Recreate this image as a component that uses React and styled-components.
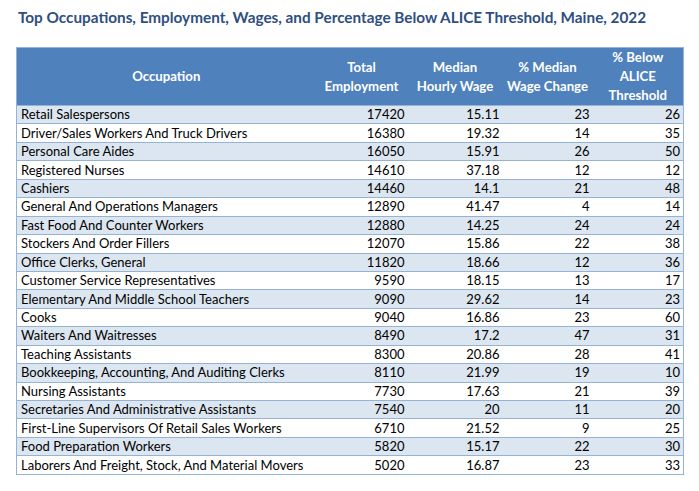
import React from 'react';
import styled, { createGlobalStyle } from 'styled-components';

const GlobalStyle = createGlobalStyle`
  html, body {
    margin: 0;
    padding: 0;
    background: #fff;
  }
  body {
    font-family: Lato, "Open Sans", sans-serif;
  }
`;

const Page = styled.div`
  width: 699px;
  height: 491px;
  padding: 8px 0 0 16px;
  box-sizing: border-box;
  overflow: hidden;
`;

const Title = styled.h1`
  margin: 0 0 0 2px;
  font-size: 15.3px;
  font-weight: 700;
  color: #2e4f80;
  line-height: 18px;
  height: 39px;
  white-space: nowrap;
`;

const Table = styled.table`
  border-collapse: collapse;
  table-layout: fixed;
  width: 667px;
  border: 1.5px solid #95b3d7;
  font-size: 13px;
  color: #000;
`;

const HeadRow = styled.tr`
  height: 57px;
  background: #4f81bd;
`;

const HeadCell = styled.th`
  padding: 0 2px;
  color: #fff;
  font-weight: 700;
  font-size: 13.2px;
  line-height: 19px;
  text-align: center;
  vertical-align: middle;
`;

const Row = styled.tr`
  height: 18.45px;
  background: ${(p) => (p.$alt ? '#dce6f1' : '#fff')};
  border-top: 1.5px solid #95b3d7;
`;

const Cell = styled.td`
  padding: 0 3px 0 4px;
  line-height: 17px;
  white-space: nowrap;
  overflow: hidden;
  text-align: ${(p) => (p.$num ? 'right' : 'left')};
`;

const cols = [299, 92, 95, 90, 91];

const heads = [
  ['Occupation'],
  ['Total', 'Employment'],
  ['Median', 'Hourly Wage'],
  ['% Median', 'Wage Change'],
  ['% Below', 'ALICE', 'Threshold'],
];

const rows = [
  ['Retail Salespersons', 17420, '15.11', 23, 26],
  ['Driver/Sales Workers And Truck Drivers', 16380, '19.32', 14, 35],
  ['Personal Care Aides', 16050, '15.91', 26, 50],
  ['Registered Nurses', 14610, '37.18', 12, 12],
  ['Cashiers', 14460, '14.1', 21, 48],
  ['General And Operations Managers', 12890, '41.47', 4, 14],
  ['Fast Food And Counter Workers', 12880, '14.25', 24, 24],
  ['Stockers And Order Fillers', 12070, '15.86', 22, 38],
  ['Office Clerks, General', 11820, '18.66', 12, 36],
  ['Customer Service Representatives', 9590, '18.15', 13, 17],
  ['Elementary And Middle School Teachers', 9090, '29.62', 14, 23],
  ['Cooks', 9040, '16.86', 23, 60],
  ['Waiters And Waitresses', 8490, '17.2', 47, 31],
  ['Teaching Assistants', 8300, '20.86', 28, 41],
  ['Bookkeeping, Accounting, And Auditing Clerks', 8110, '21.99', 19, 10],
  ['Nursing Assistants', 7730, '17.63', 21, 39],
  ['Secretaries And Administrative Assistants', 7540, '20', 11, 20],
  ['First-Line Supervisors Of Retail Sales Workers', 6710, '21.52', 9, 25],
  ['Food Preparation Workers', 5820, '15.17', 22, 30],
  ['Laborers And Freight, Stock, And Material Movers', 5020, '16.87', 23, 33],
];

export default function App() {
  return (
    <>
      <GlobalStyle />
      <Page>
        <Title>
          Top Occupations, Employment, Wages, and Percentage Below ALICE Threshold, Maine, 2022
        </Title>
        <Table>
          <colgroup>
            {cols.map((w, i) => (
              <col key={i} style={{ width: w }} />
            ))}
          </colgroup>
          <thead>
            <HeadRow>
              {heads.map((lines, i) => (
                <HeadCell key={i}>
                  {lines.map((l, j) => (
                    <React.Fragment key={j}>
                      {j > 0 && <br />}
                      {l}
                    </React.Fragment>
                  ))}
                </HeadCell>
              ))}
            </HeadRow>
          </thead>
          <tbody>
            {rows.map((r, i) => (
              <Row key={i} $alt={i % 2 === 0}>
                {r.map((v, j) => (
                  <Cell key={j} $num={j > 0}>
                    {v}
                  </Cell>
                ))}
              </Row>
            ))}
          </tbody>
        </Table>
      </Page>
    </>
  );
}
